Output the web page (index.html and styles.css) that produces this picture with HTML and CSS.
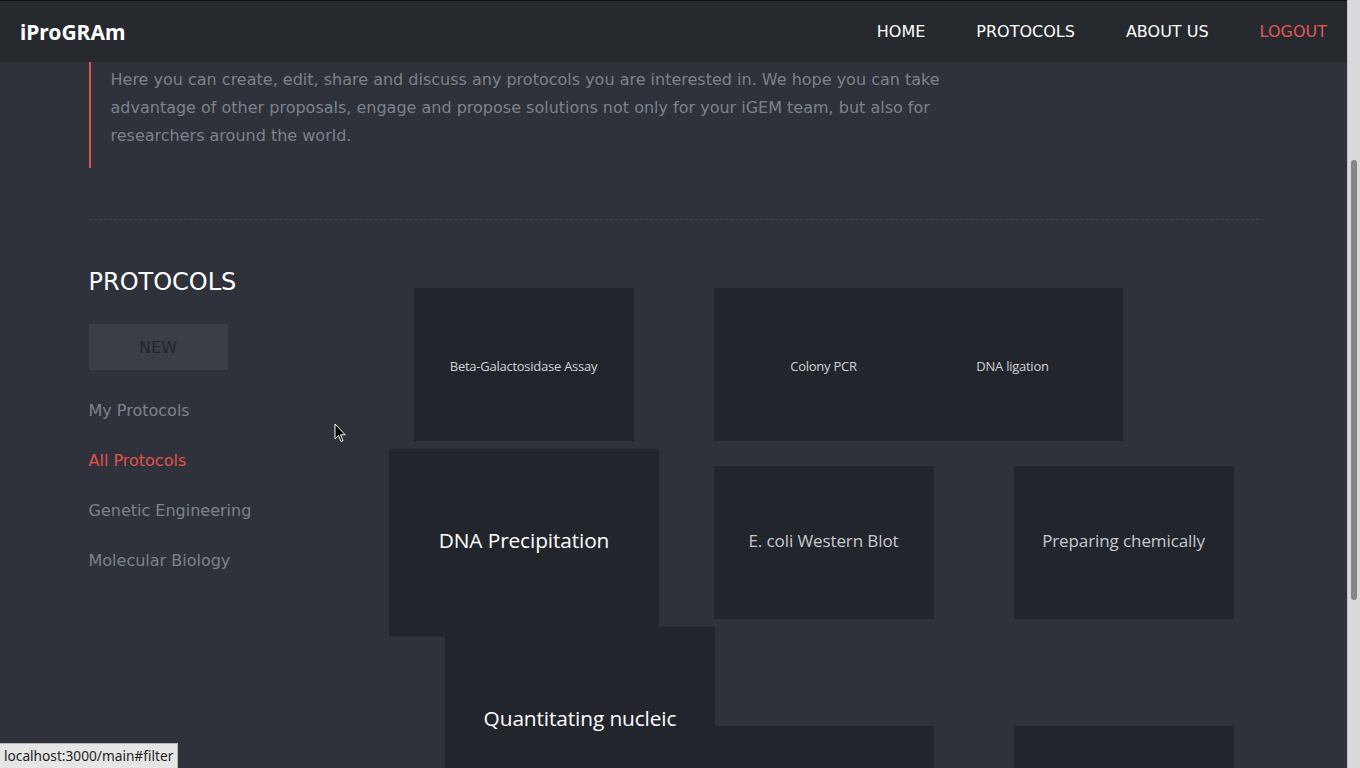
FILE: index.html
```html
<!DOCTYPE html>
<html lang="en">
<head>
<meta charset="utf-8">
<title>iProGRAm</title>
<link rel="stylesheet" href="styles.css">
</head>
<body>
<div class="page">
  <header class="navbar">
    <a class="brand" href="#">iProGRAm</a>
    <nav class="nav-links">
      <a href="#">HOME</a>
      <a href="#">PROTOCOLS</a>
      <a href="#">ABOUT US</a>
      <a href="#" class="logout">LOGOUT</a>
    </nav>
  </header>

  <main class="container">
    <blockquote class="intro">
      <p>Here you can create, edit, share and discuss any protocols you are interested in. We hope you can take advantage of other proposals, engage and propose solutions not only for your iGEM team, but also for researchers around the world.</p>
    </blockquote>

    <hr class="divider">

    <section class="protocols">
      <aside class="sidebar">
        <h2 class="title">PROTOCOLS</h2>
        <button class="btn-new">NEW</button>
        <ul class="filters">
          <li><a href="#">My Protocols</a></li>
          <li><a href="#" class="active">All Protocols</a></li>
          <li><a href="#">Genetic Engineering</a></li>
          <li><a href="#">Molecular Biology</a></li>
        </ul>
      </aside>

      <div class="grid">
        <div class="card small">Beta-Galactosidase Assay</div>
        <div class="card small">Colony PCR</div>
        <div class="card small shift-left">DNA ligation</div>
        <div class="card grow">DNA Precipitation</div>
        <div class="card">E. coli Western Blot</div>
        <div class="card">Preparing chemically</div>
        <div class="card grow shift-right">Quantitating nucleic</div>
        <div class="card drop"></div>
        <div class="card drop"></div>
      </div>
    </section>
  </main>

  <div class="status">localhost:3000/main#filter</div>
  <svg class="cursor" width="13" height="21" viewBox="0 0 13 21" aria-hidden="true">
    <path d="M1 1 L1 16 L4.5 12.5 L7 18.5 L9 17.6 L6.6 11.8 L11.2 11.8 Z" fill="#000" stroke="#fff" stroke-width="1" stroke-linejoin="miter"/>
  </svg>
</div>
<div class="scrollbar"><div class="thumb"></div></div>
</body>
</html>
```

FILE: styles.css
```css
* { box-sizing: border-box; }

html, body {
  margin: 0;
  height: 100%;
}

body {
  display: flex;
  height: 768px;
  overflow: hidden;
  font-family: "DejaVu Sans", Verdana, sans-serif;
  background: #2f323a;
}

a { text-decoration: none; color: inherit; }

.page {
  position: relative;
  flex: 1;
  min-width: 0;
  overflow: hidden;
  background: #2f323a;
}

/* Navbar */
.navbar {
  height: 62px;
  border-top: 1px solid #0d0e10;
  background: #26292e;
  display: flex;
  align-items: center;
  justify-content: space-between;
  padding: 0 20px;
}

.brand {
  font-family: "Noto Sans", "DejaVu Sans", sans-serif;
  font-weight: 700;
  font-size: 21px;
  color: #fff;
}

.nav-links {
  display: flex;
  gap: 51px;
}

.nav-links a {
  font-size: 16px;
  color: #ffffff;
}

.nav-links .logout { color: #e05a57; }

/* Content */
.container {
  width: 1170px;
  margin: 0 auto;
}

.intro {
  margin: 0;
  border-left: 2px solid #d9534f;
  padding: 4px 0 18px 20px;
}

.intro p {
  margin: 0;
  max-width: 860px;
  font-size: 16px;
  line-height: 28px;
  color: #7d828c;
}

.divider {
  margin: 51px 0 0;
  height: 0;
  border: 0;
  border-top: 1px dashed #3e424a;
}

.protocols {
  display: flex;
  align-items: flex-start;
  padding-top: 48px;
}

.sidebar {
  flex: none;
  width: 325px;
}

.title {
  margin: 0;
  font-size: 24px;
  line-height: 28px;
  font-weight: 400;
  color: #ffffff;
}

.btn-new {
  display: block;
  margin-top: 28px;
  width: 139px;
  height: 46px;
  border: 0;
  background: #3b3e47;
  color: #23262c;
  font-family: "DejaVu Sans", sans-serif;
  font-size: 16px;
  padding: 0;
}

.filters {
  list-style: none;
  margin: 16px 0 0;
  padding: 0;
}

.filters li {
  line-height: 50px;
  font-size: 16px;
  color: #7d828c;
}

.filters .active { color: #e0534f; }

/* Grid of protocol tiles */
.grid {
  margin-top: 20px;
  display: grid;
  grid-template-columns: repeat(3, 220px);
  grid-auto-rows: 153px;
  column-gap: 80px;
  row-gap: 25px;
}

.card {
  background: #22252c;
  display: flex;
  align-items: center;
  justify-content: center;
  text-align: center;
  padding-bottom: 4px;
  font-family: "Open Sans", "Noto Sans", sans-serif;
  font-size: 17px;
  letter-spacing: -0.1px;
  color: #c8c9cc;
}

.card.small {
  padding-bottom: 0;
  padding-top: 2px;
  font-size: 13px;
  letter-spacing: -0.25px;
  color: #d2d3d5;
}

.card.shift-left { transform: translateX(-111px); }

.card.grow {
  transform: scale(1.227);
  color: #ffffff;
  z-index: 1;
}

.card.grow.shift-right { transform: translateX(56px) scale(1.227); }

.card.drop { transform: translateY(82px); }

/* Browser chrome overlays */
.status {
  position: absolute;
  left: 0;
  bottom: 0;
  height: 25px;
  padding: 0 4px;
  background: #e6e6e6;
  border-top: 1px solid #b8b8b8;
  border-right: 1px solid #b8b8b8;
  font-family: "Noto Sans", "DejaVu Sans", sans-serif;
  font-size: 13.7px;
  line-height: 24px;
  color: #1e1e1e;
  z-index: 5;
}

.cursor {
  position: absolute;
  left: 334px;
  top: 423px;
  z-index: 6;
}

.scrollbar {
  flex: none;
  width: 13px;
  background: #dadada;
  border-left: 1px solid #c4c4c4;
  padding-top: 160px;
}

.thumb {
  margin-left: 3px;
  width: 6px;
  height: 440px;
  border-radius: 3px;
  background: #858585;
}
```
